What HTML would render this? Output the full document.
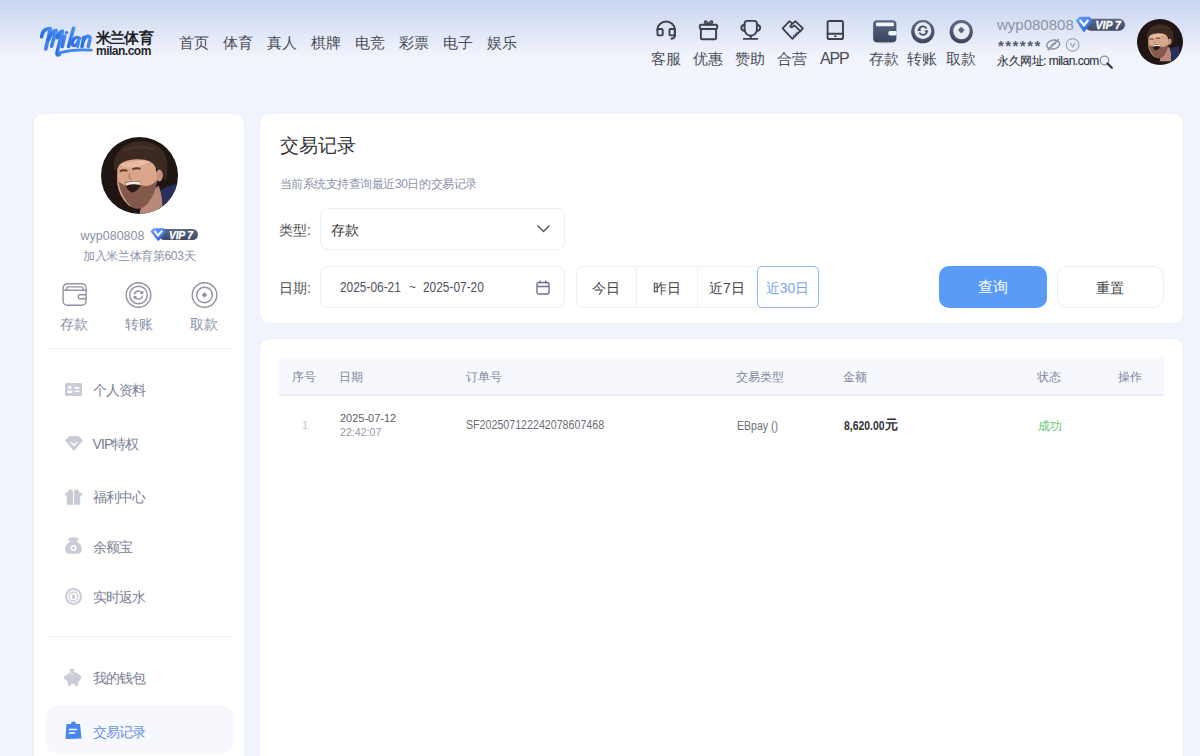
<!DOCTYPE html>
<html><head><meta charset="utf-8">
<style>
*{margin:0;padding:0;box-sizing:border-box}
html,body{width:1200px;height:756px;overflow:hidden}
body{font-family:"Liberation Sans",sans-serif;background:linear-gradient(180deg,#cad6f1 0px,#d3ddf3 15px,#dde5f6 30px,#e9eef9 45px,#f1f4fc 58px,#f3f6fd 75px,#f1f4fd 120px);position:relative;color:#333}
.a{position:absolute;white-space:nowrap;line-height:1}
svg{position:absolute;overflow:visible}
.nav span{position:absolute;top:34px;font-size:15px;line-height:17px;color:#4a4d57;white-space:nowrap}
.tool{position:absolute;top:50px;font-size:15px;line-height:17px;color:#4a4d57;white-space:nowrap}
.card{position:absolute;background:#fff;border-radius:9px;box-shadow:0 0 3px rgba(40,60,110,0.05)}
.menu{position:absolute;left:92.5px;font-size:14px;line-height:16px;letter-spacing:-0.9px;color:#7a7f94;white-space:nowrap}
.din{font-family:"Liberation Sans",sans-serif}
</style></head>
<body>
<!-- ============ HEADER ============ -->
<svg style="left:36px;top:22px" width="60" height="38" viewBox="0 0 60 38" fill="none" stroke-linecap="round" stroke-linejoin="round">
<defs><linearGradient id="gl" x1="0" y1="0" x2="1" y2="0"><stop offset="0" stop-color="#2f6ee0"/><stop offset="1" stop-color="#4a8ff0"/></linearGradient></defs>
<g stroke="url(#gl)" stroke-width="3.6">
<path d="M5.6 14.8 Q6.5 9 10 7.5 Q12.5 6.3 14.4 6.6 L9.8 27"/>
<path d="M12.3 18 Q16.5 8.5 20.2 8.4 L15.6 24.2"/>
<path d="M21.2 15.6 Q24 9 26.6 9 L21 30.5 Q20 33.6 23.5 32.6"/>
<path d="M28.8 14 L26.3 24.6"/>
<path d="M37.6 6.3 L32.6 24.4"/>
<path d="M44 16.2 Q38.8 13.6 36.6 19.8 Q35.4 24.4 38.8 23.6 Q41.3 22.4 43.2 16.4 L41.6 24.4" stroke-width="3.2"/>
<path d="M48 15.4 L46 24.6 M47.3 18.6 Q50.5 13 53.6 14.6 Q54.6 15.4 54 17.6 L52.3 24.4"/>
</g>
<circle cx="30.6" cy="10.6" r="1.7" fill="#3a7ae8"/>
<path d="M23.5 30.8 Q38 26.8 55.3 28.2" stroke="#3f86ee" stroke-width="2.8"/>
</svg>
<div class="a" style="left:96px;top:30px;font-size:15px;font-weight:900;color:#1f2127;line-height:16px;letter-spacing:-0.8px">米兰体育</div>
<div class="a" style="left:96px;top:45px;font-size:12px;font-weight:bold;color:#26282f;line-height:12px;letter-spacing:-0.5px">milan.com</div>
<div class="nav" style="position:absolute;left:1px;top:0">
<span style="left:178px">首页</span><span style="left:222px">体育</span><span style="left:266px">真人</span><span style="left:310px">棋牌</span><span style="left:354px">电竞</span><span style="left:398px">彩票</span><span style="left:442px">电子</span><span style="left:486px">娱乐</span>
</div>

<!-- tool icons -->
<svg style="left:0;top:0" width="1000" height="50" viewBox="0 0 1000 50" fill="none" stroke="#3d404c" stroke-width="1.9" stroke-linecap="round" stroke-linejoin="round">
<defs>
<linearGradient id="gw" x1="0" y1="0" x2="0" y2="1"><stop offset="0" stop-color="#5a6683"/><stop offset="1" stop-color="#3b4460"/></linearGradient>
<radialGradient id="gc" cx="0.5" cy="0.38" r="0.62"><stop offset="0.55" stop-color="#5e6782"/><stop offset="1" stop-color="#343c56"/></radialGradient>
</defs>
<!-- headset -->
<path d="M657.3 30 V29.5 A8.9 8.9 0 0 1 675 29.5 V35"/>
<rect x="657.5" y="29" width="5.2" height="6.4" rx="1"/>
<rect x="669.5" y="29" width="5.2" height="6.4" rx="1"/>
<path d="M675 34 V35 Q675 38.3 671.5 38.8"/>
<!-- gift -->
<rect x="699.8" y="24.8" width="17.4" height="4.2" rx="1.2"/>
<rect x="700.9" y="29" width="15.2" height="10.3" rx="1.3"/>
<path d="M708.5 24.6 Q704 24 704.8 21.6 Q706 19.8 708.5 24.6 Z M708.6 24.6 Q713 24 712.3 21.6 Q711 19.8 708.6 24.6 Z" stroke-width="1.7"/>
<!-- trophy -->
<path d="M744.6 23.5 Q744.6 20.9 747.3 20.9 H754.2 Q756.9 20.9 756.9 23.5 V29.6 A6.15 6.15 0 0 1 744.6 29.6 Z"/>
<path d="M744.5 24.8 Q741.3 25.3 741.3 27.8 Q741.3 30.5 744.8 31"/>
<path d="M757 24.8 Q760.2 25.3 760.2 27.8 Q760.2 30.5 756.7 31"/>
<path d="M750.7 35.8 V38.6 M743.8 38.9 H757.3"/>
<!-- handshake -->
<path d="M782.6 28.35 L789.3 21.3 L792.4 23.6 L795.5 21.3 L802.9 28.35 L792.4 38.8 Z" stroke-width="1.8"/>
<path d="M792.4 23.6 L790.2 26 Q790.3 27.6 791.8 27.3 L794.4 25.4 L800.6 31.3" stroke-width="1.7"/>
<path d="M793.6 36.6 V35 M795.3 35 V33.4 M797 33.3 V31.7" stroke-width="1.3" stroke-linecap="butt"/>
<!-- tablet -->
<rect x="827.6" y="21" width="15.4" height="18" rx="1.6"/>
<path d="M827.6 33.8 H843"/>
<rect x="834" y="35.6" width="2.6" height="1.4" fill="#3d404c" stroke="none"/>
<!-- wallet -->
<g stroke="none">
<ellipse cx="884.7" cy="42.5" rx="10" ry="1.2" fill="#c5cad8"/>
<rect x="873.1" y="20.2" width="23.3" height="22" rx="3.8" fill="url(#gw)"/>
<rect x="876" y="22.5" width="18" height="3.8" rx="1.2" fill="#f2f4fa"/>
<rect x="888.3" y="31.1" width="8.4" height="4.3" rx="1.6" fill="#eef1f8"/>
<!-- transfer -->
<circle cx="922.8" cy="31.7" r="11.6" fill="url(#gc)"/>
<circle cx="922.9" cy="30.6" r="8.4" fill="#e9ecf4"/>
<circle cx="961.2" cy="31.7" r="11.6" fill="url(#gc)"/>
<circle cx="961.5" cy="31.1" r="8.2" fill="#e9ecf4"/>
<path d="M961.3 26.8 L964.6 30.1 L961.3 33.4 L958 30.1 Z" fill="#5a6380"/>
</g>
<path d="M918.9 30.1 A4.1 4.1 0 0 1 926.6 28.6 M927 31.2 A4.1 4.1 0 0 1 919.3 32.7" stroke="#4a5370" stroke-width="1.8" stroke-linecap="butt"/>
<path d="M918.2 30.3 H920.5 M927.6 31 H925.3" stroke="#4a5370" stroke-width="1.6"/>
</svg>
<span class="tool" style="left:651px">客服</span>
<span class="tool" style="left:693px">优惠</span>
<span class="tool" style="left:735px">赞助</span>
<span class="tool" style="left:777px">合营</span>
<span class="tool" style="left:820px;top:50px;font-size:16px;letter-spacing:-1.2px">APP</span>

<!-- deposit/transfer/withdraw -->
<span class="tool" style="left:869px">存款</span>
<span class="tool" style="left:907px">转账</span>
<span class="tool" style="left:946px">取款</span>

<!-- user -->
<div class="a" style="left:997px;top:17px;font-size:15px;color:#8d93a8">wyp080808</div>
<svg style="left:1075px;top:16px" width="52" height="18" viewBox="0 0 52 18">
<defs><linearGradient id="gv" x1="0" y1="0" x2="0" y2="1"><stop offset="0" stop-color="#5d6986"/><stop offset="1" stop-color="#3f4864"/></linearGradient>
<linearGradient id="gd" x1="0" y1="0" x2="1" y2="1"><stop offset="0" stop-color="#6ea4ff"/><stop offset="0.6" stop-color="#3d74e6"/><stop offset="1" stop-color="#2f5fd0"/></linearGradient></defs>
<rect x="10" y="2.75" width="40" height="12" rx="6" fill="url(#gv)"/>
<path d="M0.75 4.5 L4.5 0.75 H14.5 L17.5 4.5 L9 16.5 Z" fill="url(#gd)"/><path d="M4.8 4 L9 9.3 L13.4 3.8" fill="none" stroke="#e8f6ff" stroke-width="2.4"/>
<text x="20.5" y="12.75" font-family="Liberation Sans" font-style="italic" font-weight="bold" font-size="10.5" fill="#fff" stroke="#fff" stroke-width="0.3">VIP 7</text>
</svg>
<div class="a" style="left:998px;top:38px;font-size:15px;font-weight:bold;color:#585c68;letter-spacing:1.45px">******</div>
<svg style="left:0;top:0" width="1100" height="60" viewBox="0 0 1100 60" fill="none" stroke="#8f94a3" stroke-width="1.5" stroke-linecap="round">
<ellipse cx="1053.2" cy="44.6" rx="6.5" ry="4.4" transform="rotate(-12 1053.2 44.6)"/>
<path d="M1051.5 45.5 Q1052.5 43 1055 43.5"/>
<path d="M1048.2 49.6 L1058.4 39.6" stroke-width="1.6"/>
<circle cx="1072.6" cy="44.9" r="6.3" stroke="#a2a7b6" stroke-width="1.2"/>
<path d="M1070.3 43.4 L1072.6 46.9 L1074.9 43.4" stroke="#a2a7b6" stroke-width="1.2"/>
</svg>
<div class="a" style="left:997px;top:55px;font-size:12px;letter-spacing:-0.5px;color:#33363f;-webkit-text-stroke:0.15px #33363f">永久网址: milan.com</div>
<svg style="left:1099px;top:55px" width="14" height="14" viewBox="0 0 14 14">
<circle cx="5.5" cy="5.5" r="4.3" fill="#eef2fa" stroke="#8a8f9e" stroke-width="1.3"/><path d="M8.5 8.5 L12.8 12.8" stroke="#333" stroke-width="2.2" stroke-linecap="round"/>
</svg>
<!-- header avatar -->
<svg style="left:1137px;top:19px" width="46" height="46" viewBox="0 0 76 76">
<g clip-path="url(#cc)"><use href="#face" transform="translate(5,5) scale(0.85)"/></g>
</svg>

<!-- ============ SIDEBAR ============ -->
<div class="card" style="left:34px;top:114px;width:210px;height:680px"></div>
<svg style="left:101px;top:137px" width="77" height="77" viewBox="0 0 76 76">
<defs><clipPath id="cc"><circle cx="38" cy="38" r="38"/></clipPath>
<g id="face"><g>
<rect x="-10" y="-10" width="96" height="96" fill="#1f1512"/>
<path d="M56 54 Q66 48 76 46 V76 H56 Z" fill="#29305c"/>
<path d="M42 58 L57 48 Q62 62 60 76 H38 Z" fill="#b9897a"/>
<path d="M13 34 Q10 12 32 5 Q54 1 64 18 Q67 30 64 44 Q60 36 55 31 Q46 22 18 28 Z" fill="#3b2a21"/>
<path d="M22 14 Q36 7 52 12" stroke="#47342a" stroke-width="2.5" fill="none"/>
<ellipse cx="57.5" cy="38" rx="3.5" ry="6" fill="#c69380"/>
<path d="M16 32 Q18 23 34 22 Q50 21 54 30 L55.5 44 Q52 58 44 66 Q36 72 28 68 Q18 60 16 46 Z" fill="#d9a68b"/>
<path d="M19 27 Q34 22 48 24 Q40 30 30 30 Q22 31 19 27 Z" fill="#e8bca3"/>
<path d="M17 44 Q20 60 30 69 Q38 74 46 66 Q54 56 55.5 42 Q50 50 42 48 Q32 46 24 48 Z" fill="#82594a"/>
<path d="M23.5 45.5 Q31 42.5 39.5 44.5 Q38.5 53 31 55 Q25 53 23.5 45.5 Z" fill="#2e1a18"/>
<path d="M24 45.6 Q31 43 39.3 44.7 L38.8 47.3 Q31 45.8 24.6 48 Z" fill="#f3ebe6"/>
<path d="M18.5 34 Q22 32 26 33.5 M31 32 Q35 30 39 31.5" stroke="#5b3b2e" stroke-width="1.8" fill="none"/>
<path d="M28 36 Q27 41 30 42" stroke="#b47e68" stroke-width="1.5" fill="none"/>
</g></g></defs>
<g clip-path="url(#cc)"><use href="#face"/></g>
</svg>
<div class="a" style="left:80.5px;top:230px;font-size:12.5px;color:#8a90a8">wyp080808</div>
<svg style="left:150px;top:228px" width="50" height="15" viewBox="0 0 50 15">
<rect x="9" y="1" width="39" height="11" rx="5.5" fill="url(#gv)"/>
<path d="M0.5 3.5 L3.5 0.3 H14 L16.5 3.5 L8.3 13.3 Z" fill="url(#gd)"/><path d="M4.3 2.8 L8 7.5 L12.3 2.5" fill="none" stroke="#e8f6ff" stroke-width="2.2"/>
<text x="19" y="10.6" font-family="Liberation Sans" font-style="italic" font-weight="bold" font-size="10.3" fill="#fff" stroke="#fff" stroke-width="0.25" letter-spacing="-0.2">VIP 7</text>
</svg>
<div class="a" style="left:83px;top:250px;font-size:12px;line-height:13px;letter-spacing:-0.35px;color:#8a90a8">加入米兰体育第603天</div>

<!-- sidebar quick icons -->
<svg style="left:62px;top:282px" width="26" height="25" viewBox="0 0 26 25" fill="none" stroke="#90939f" stroke-width="1.4">
<rect x="1.1" y="1.8" width="23" height="21.5" rx="4.2"/><path d="M1.1 8.2 H24.1"/><path d="M4.6 8.2 V6.2 Q4.6 4.9 5.9 4.9 H19.8 Q21.1 4.9 21.1 6.2 V8.2"/><path d="M24.1 12.7 H17.4 Q16.3 12.7 16.3 13.8 V15.6 Q16.3 16.7 17.4 16.7 H24.1"/>
</svg>
<svg style="left:125px;top:282px" width="27" height="26" viewBox="0 0 27 26" fill="none" stroke="#90939f" stroke-width="1.4">
<circle cx="13.5" cy="13" r="12.3"/><circle cx="13.5" cy="13" r="8.8"/><path d="M9.5 12.5 A4 4 0 0 1 17 11 M17.5 13.5 A4 4 0 0 1 10 15"/><path d="M15.5 11.2 H17.6 V9 M11.5 14.8 H9.4 V17"/>
</svg>
<svg style="left:191px;top:282px" width="27" height="26" viewBox="0 0 27 26" fill="none" stroke="#90939f" stroke-width="1.4">
<circle cx="13.5" cy="13" r="12.3"/><circle cx="13.5" cy="13" r="7.8"/><path d="M13.5 10.3 L16.2 13 L13.5 15.7 L10.8 13 Z" fill="#90939f" stroke="none"/>
</svg>
<div class="a" style="left:60px;top:316px;font-size:14px;line-height:16px;color:#8a90a8">存款</div>
<div class="a" style="left:125px;top:316px;font-size:14px;line-height:16px;color:#8a90a8">转账</div>
<div class="a" style="left:190px;top:316px;font-size:14px;line-height:16px;color:#8a90a8">取款</div>
<div class="a" style="left:46px;top:348px;width:186px;height:1px;background:#eff0f4"></div>

<!-- menu -->
<svg style="left:65px;top:383px" width="17" height="13" viewBox="0 0 17 13"><rect width="17" height="13" rx="1.5" fill="#c9cbd6"/><rect x="3" y="3" width="3.5" height="3" rx="1" fill="#fff"/><rect x="2" y="7.5" width="5.5" height="2.5" rx="1" fill="#fff"/><rect x="9.5" y="4" width="5" height="1.6" fill="#fff"/><rect x="9.5" y="7.5" width="5" height="1.6" fill="#fff"/></svg>
<div class="menu" style="top:382px">个人资料</div>
<svg style="left:64.5px;top:436px" width="18" height="15" viewBox="0 0 18 15"><path d="M4.5 0.5 H13.5 L17.5 4.5 L9 14.5 L0.5 4.5 Z" fill="#c9cbd6" stroke="#c9cbd6" stroke-linejoin="round"/><path d="M6.3 6.8 L9 9.3 L11.7 6.8" fill="none" stroke="#fff" stroke-width="1.5" stroke-linecap="round" stroke-linejoin="round"/></svg>
<div class="menu" style="top:436px">VIP特权</div>
<svg style="left:65px;top:489px" width="17" height="16" viewBox="0 0 17 16" fill="#c9cbd7"><path d="M2.8 4.5 Q2.5 0.6 5.5 0.4 Q8 0.5 8.2 4.5 Z"/><path d="M14.2 4.5 Q14.5 0.6 11.5 0.4 Q9 0.5 8.8 4.5 Z"/><rect x="0" y="3.8" width="17" height="3" rx="1"/><rect x="1.8" y="6" width="13.4" height="9.8" rx="1"/><rect x="8" y="0" width="1" height="16" fill="#fff"/></svg>
<div class="menu" style="top:489px">福利中心</div>
<svg style="left:65px;top:537px" width="17" height="17" viewBox="0 0 17 17"><ellipse cx="8.5" cy="2.6" rx="5" ry="2.4" fill="#c9cbd6"/><path d="M5.5 4.5 H11.5 Q17 7 16.8 12.5 Q16.5 16.8 12 16.8 H5 Q0.5 16.8 0.2 12.5 Q0 7 5.5 4.5 Z" fill="#c9cbd6"/><circle cx="8.5" cy="11" r="3" fill="#fff"/><circle cx="8.5" cy="11" r="1.4" fill="#c9cbd6"/></svg>
<div class="menu" style="top:539px">余额宝</div>
<svg style="left:64.5px;top:588px" width="17" height="17" viewBox="0 0 17 17" fill="none" stroke="#c9cbd6"><circle cx="8.5" cy="8.5" r="7.5" stroke-width="2"/><circle cx="8.5" cy="8.5" r="4.5" stroke-width="1.3"/><path d="M8.5 5.5 Q6 8.5 6.8 10 Q8.5 12 10.2 10 Q11 8.5 8.5 5.5 Z" fill="#c9cbd6" stroke="none"/></svg>
<div class="menu" style="top:589px">实时返水</div>
<div class="a" style="left:46px;top:636px;width:186px;height:1px;background:#eff0f4"></div>
<svg style="left:64px;top:668px" width="18" height="18" viewBox="0 0 18 18" fill="#c9cbd6"><circle cx="8" cy="2.5" r="2"/><ellipse cx="9" cy="10" rx="7.5" ry="6"/><path d="M0 8.5 L2.5 7 L2.5 12 L0 11 Z"/><path d="M15 7 L18 9 L15.5 12 Z"/><rect x="4" y="13" width="3" height="5" rx="1"/><rect x="11" y="13" width="3" height="5" rx="1"/><path d="M6 6.5 H10" stroke="#e6e7ed" stroke-width="1.2"/></svg>
<div class="menu" style="top:670px">我的钱包</div>
<div class="a" style="left:46px;top:705px;width:187px;height:49px;border-radius:12px;background:#f6f8fe"></div>
<svg style="left:65px;top:721px" width="17" height="18" viewBox="0 0 17 18"><path d="M1.5 3 H15 L16.5 17.5 L2 18 Q0.5 18 0.5 16.5 Z" fill="#4788ee"/><path d="M6 3 Q6 0.5 8.5 0.5 Q11 0.5 11 3 Z" fill="#4788ee"/><path d="M4.5 8.5 H11.5 M4.5 12 H9.5" stroke="#fff" stroke-width="1.5" stroke-linecap="round"/></svg>
<div class="menu" style="top:724px;color:#6690de">交易记录</div>

<!-- ============ TOP CARD ============ -->
<div class="card" style="left:260px;top:114px;width:923px;height:209px"></div>
<div class="a" style="left:279.5px;top:135px;font-size:19px;line-height:22px;color:#333">交易记录</div>
<div class="a" style="left:279.5px;top:177px;font-size:12px;line-height:14px;letter-spacing:-0.45px;color:#8c91ad">当前系统支持查询最近30日的交易记录</div>

<div class="a" style="left:279px;top:222px;font-size:14px;line-height:16px;color:#555">类型:</div>
<div class="a" style="left:319.5px;top:208px;width:245px;height:42px;border:1px solid #eef0f5;border-radius:8px"></div>
<div class="a" style="left:331px;top:222px;font-size:14px;line-height:16px;color:#333">存款</div>
<svg style="left:537px;top:225px" width="13" height="8" viewBox="0 0 13 8" fill="none" stroke="#5a5d68" stroke-width="1.5" stroke-linecap="round" stroke-linejoin="round"><path d="M1 1 L6.5 6.5 L12 1"/></svg>

<div class="a" style="left:279px;top:280px;font-size:14px;line-height:16px;color:#555">日期:</div>
<div class="a" style="left:319.5px;top:266px;width:245px;height:42px;border:1px solid #eef0f5;border-radius:8px"></div>
<div class="a" style="left:339.5px;top:279px;font-size:14.5px;line-height:16px;color:#4f525c;transform:scaleX(0.82);transform-origin:0 0">2025-06-21</div>
<div class="a" style="left:409px;top:280px;font-size:12px;line-height:14px;color:#4f525c">~</div>
<div class="a" style="left:422.5px;top:279px;font-size:14.5px;line-height:16px;color:#4f525c;transform:scaleX(0.82);transform-origin:0 0">2025-07-20</div>
<svg style="left:536px;top:280px" width="14" height="15" viewBox="0 0 14 15" fill="none" stroke="#6b7192" stroke-width="1.4"><rect x="1" y="2.5" width="12" height="11.5" rx="2"/><path d="M1 6.5 H13 M4.2 0.5 V3.5 M9.8 0.5 V3.5"/></svg>

<div class="a" style="left:575.5px;top:265.5px;width:243px;height:42px;border:1px solid #eef0f4;border-radius:7px"></div>
<div class="a" style="left:636px;top:266px;width:1px;height:41px;background:#eef0f4"></div>
<div class="a" style="left:696.5px;top:266px;width:1px;height:41px;background:#eef0f4"></div>
<div class="a" style="left:756.5px;top:265.5px;width:62px;height:42px;border:1px solid #8fb4f0;border-radius:5px"></div>
<div class="a" style="left:576px;top:280px;width:60px;text-align:center;font-size:14px;line-height:16px;color:#444">今日</div>
<div class="a" style="left:637px;top:280px;width:60px;text-align:center;font-size:14px;line-height:16px;color:#444">昨日</div>
<div class="a" style="left:697px;top:280px;width:60px;text-align:center;font-size:14px;line-height:16px;color:#444">近7日</div>
<div class="a" style="left:757px;top:280px;width:61px;text-align:center;font-size:14px;line-height:16px;color:#79a5ee">近30日</div>

<div class="a" style="left:939px;top:265.5px;width:108px;height:42px;border-radius:10px;background:#5b9bf8"></div>
<div class="a" style="left:939px;top:278px;width:108px;text-align:center;font-size:15px;line-height:17px;font-weight:500;color:#fff">查询</div>
<div class="a" style="left:1056.5px;top:265.5px;width:107.5px;height:42px;border:1px solid #eceef2;border-radius:10px"></div>
<div class="a" style="left:1056.5px;top:280px;width:107.5px;text-align:center;font-size:14px;line-height:16px;color:#444">重置</div>

<!-- ============ TABLE CARD ============ -->
<div class="card" style="left:260px;top:339px;width:923px;height:440px"></div>
<div class="a" style="left:279px;top:358px;width:885px;height:38px;background:#f6f8fd;border-bottom:2px solid #e9edf6"></div>
<div class="a th" style="left:292px;top:370px;font-size:12px;line-height:14px;color:#80869c">序号</div>
<div class="a th" style="left:339px;top:370px;font-size:12px;line-height:14px;color:#80869c">日期</div>
<div class="a th" style="left:466px;top:370px;font-size:12px;line-height:14px;color:#80869c">订单号</div>
<div class="a th" style="left:736px;top:370px;font-size:12px;line-height:14px;color:#80869c">交易类型</div>
<div class="a th" style="left:843px;top:370px;font-size:12px;line-height:14px;color:#80869c">金额</div>
<div class="a th" style="left:1037px;top:370px;font-size:12px;line-height:14px;color:#80869c">状态</div>
<div class="a th" style="left:1118px;top:370px;font-size:12px;line-height:14px;color:#80869c">操作</div>

<div class="a" style="left:302px;top:419px;font-size:11px;line-height:13px;color:#c0c2ca">1</div>
<div class="a" style="left:339.5px;top:410.5px;font-size:11.7px;line-height:13px;color:#5a5d66;transform:scaleX(0.94);transform-origin:0 0">2025-07-12</div>
<div class="a" style="left:339.5px;top:425.5px;font-size:11.3px;line-height:13px;color:#9598a8;transform:scaleX(0.94);transform-origin:0 0">22:42:07</div>
<div class="a" style="left:466px;top:417px;font-size:13px;line-height:15px;color:#696c75;transform:scaleX(0.82);transform-origin:0 0">SF202507122242078607468</div>
<div class="a" style="left:736.5px;top:418.5px;font-size:12px;line-height:14px;color:#6c6f78;transform:scaleX(0.88);transform-origin:0 0">EBpay ()</div>
<div class="a" style="left:843.5px;top:417.5px;font-size:13px;line-height:15px;font-weight:bold;color:#2f3138;transform:scaleX(0.8);transform-origin:0 0">8,620.00</div><div class="a" style="left:885px;top:418px;font-size:12.5px;line-height:14px;font-weight:bold;color:#2f3138">元</div>
<div class="a" style="left:1037.5px;top:419px;font-size:12px;line-height:14px;color:#5cc96c">成功</div>
</body></html>
